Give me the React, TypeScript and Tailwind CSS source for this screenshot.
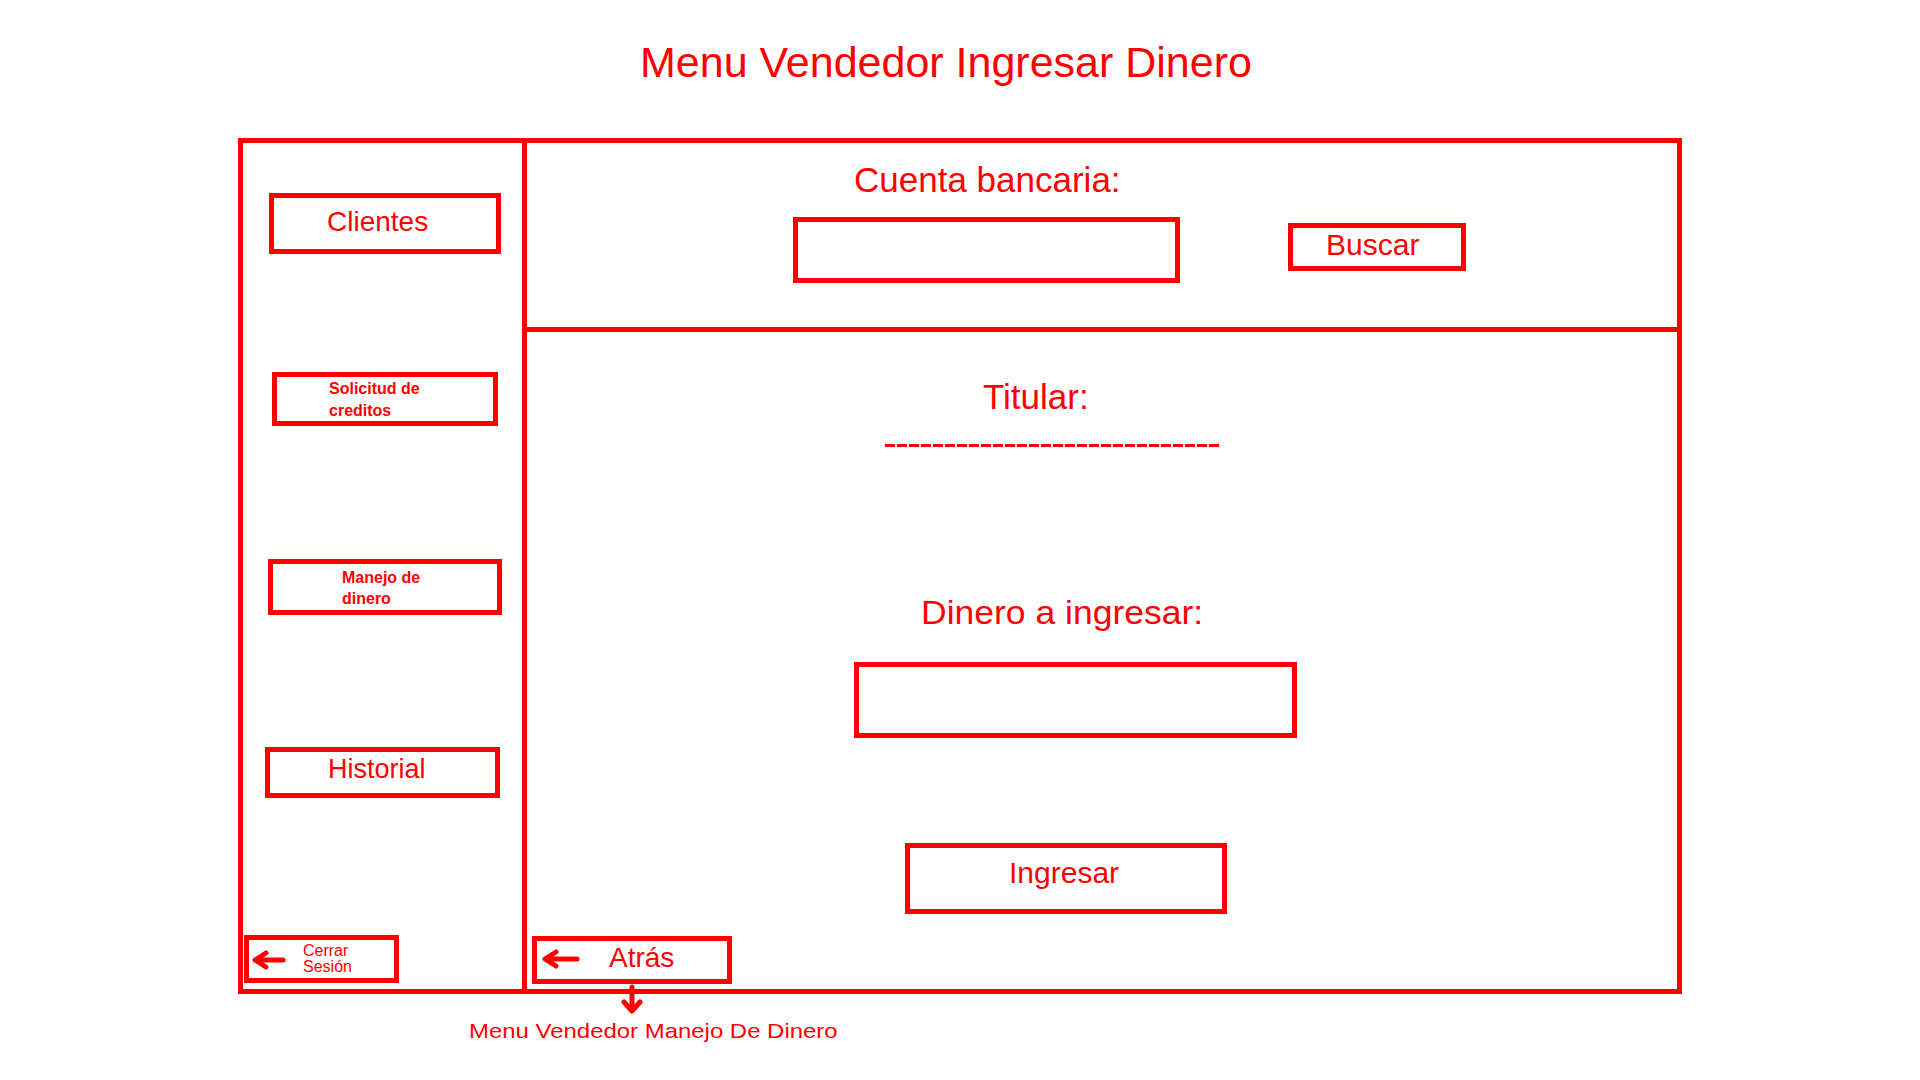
import React from "react";

const RED = "#ff0000";

function LeftArrow({ w, h }: { w: number; h: number }) {
  const mid = h / 2;
  return (
    <svg width={w} height={h} viewBox={`0 0 ${w} ${h}`} fill="none" className="shrink-0">
      <path d={`M4 ${mid} H${w - 3}`} stroke={RED} strokeWidth={5} strokeLinecap="round" />
      <path
        d={`M14 ${mid - 7} L3 ${mid} L14 ${mid + 7}`}
        stroke={RED}
        strokeWidth={5}
        strokeLinecap="round"
        strokeLinejoin="round"
      />
    </svg>
  );
}

const DASHES = Array.from({ length: 28 }, (_, i) => i);

export default function App() {
  return (
    <div className="relative h-[1080px] w-[1920px] overflow-hidden bg-white font-['Liberation_Sans',Arial,sans-serif] text-[#ff0000]">
      {/* title */}
      <div className="pl-[640px] pt-[41px] text-[43px] leading-none whitespace-nowrap">
        Menu Vendedor Ingresar Dinero
      </div>

      {/* frame */}
      <div className="ml-[238px] mt-[54px] flex h-[856px] w-[1444px] border-[5px] border-[#ff0000]">
        {/* sidebar */}
        <aside className="flex w-[284px] shrink-0 flex-col border-r-[5px] border-[#ff0000]">
          <div className="ml-[26px] mt-[50px] h-[61px] w-[232px] border-[5px] border-[#ff0000] pl-[53px] pt-[10px] text-[28px] leading-none">
            Clientes
          </div>
          <div className="ml-[29px] mt-[118px] h-[54px] w-[226px] border-[5px] border-[#ff0000] pl-[52px] pt-[1px] text-[16px] font-bold leading-[22px]">
            Solicitud de
            <br />
            creditos
          </div>
          <div className="ml-[25px] mt-[133px] h-[56px] w-[234px] border-[5px] border-[#ff0000] pl-[69px] pt-[3px] text-[16px] font-bold leading-[21px]">
            Manejo de
            <br />
            dinero
          </div>
          <div className="ml-[22px] mt-[132px] h-[51px] w-[235px] border-[5px] border-[#ff0000] pl-[58px] pt-[4px] text-[27px] leading-none">
            Historial
          </div>
          <div className="ml-px mt-[137px] flex h-[48px] w-[155px] items-start border-[5px] border-[#ff0000] pl-[3px]">
            <div className="mt-[10px]">
              <LeftArrow w={34} h={20} />
            </div>
            <div className="ml-[17px] mt-[3px] text-[16px] leading-[16px]">
              Cerrar
              <br />
              Sesión
            </div>
          </div>
        </aside>

        {/* main */}
        <main className="flex flex-1 flex-col">
          {/* search */}
          <section className="h-[189px] shrink-0 border-b-[5px] border-[#ff0000]">
            <div className="pl-[327px] pt-[19px] text-[35px] leading-none whitespace-nowrap">
              Cuenta bancaria:
            </div>
            <div className="mt-[20px] flex items-start">
              <div className="ml-[266px] h-[66px] w-[387px] border-[5px] border-[#ff0000]" />
              <div className="ml-[108px] mt-[6px] h-[48px] w-[178px] border-[5px] border-[#ff0000] pl-[33px] pt-[2px] text-[30px] leading-none">
                Buscar
              </div>
            </div>
          </section>

          {/* deposit */}
          <section className="flex flex-1 flex-col">
            <div className="pl-[456px] pt-[47px] text-[35px] leading-none">Titular:</div>
            <div className="ml-[358px] mt-[30px] flex gap-[2px]">
              {DASHES.map((i) => (
                <div key={i} className="h-[3px] w-[10px] bg-[#ff0000]" />
              ))}
            </div>
            <div className="mt-[149px] pl-[394px]">
              <span className="inline-block origin-left scale-x-[1.076] whitespace-nowrap text-[33px] leading-none">
                Dinero a ingresar:
              </span>
            </div>
            <div className="ml-[327px] mt-[31px] h-[76px] w-[443px] border-[5px] border-[#ff0000]" />
            <div className="ml-[378px] mt-[105px] h-[71px] w-[322px] border-[5px] border-[#ff0000] pl-[99px] pt-[10px] text-[30px] leading-none">
              Ingresar
            </div>
            <div className="ml-[5px] mt-[22px] flex h-[48px] w-[200px] items-start border-[5px] border-[#ff0000] pl-[5px]">
              <div className="mt-[8px]">
                <LeftArrow w={38} h={20} />
              </div>
              <div className="ml-[29px] mt-[3px] text-[28px] leading-none">Atrás</div>
            </div>
          </section>
        </main>
      </div>

      {/* link to next screen */}
      <div className="mt-[26px] pl-[469px]">
        <span className="inline-block origin-left scale-x-[1.14] whitespace-nowrap text-[21px] leading-none">
          Menu Vendedor Manejo De Dinero
        </span>
      </div>

      <svg
        width={24}
        height={30}
        viewBox="0 0 24 30"
        fill="none"
        className="absolute left-[620px] top-[984px]"
      >
        <path d="M12 3 V26" stroke={RED} strokeWidth={5} strokeLinecap="round" />
        <path
          d="M4 18 L12 27 L20 18"
          stroke={RED}
          strokeWidth={5}
          strokeLinecap="round"
          strokeLinejoin="round"
        />
      </svg>
    </div>
  );
}
